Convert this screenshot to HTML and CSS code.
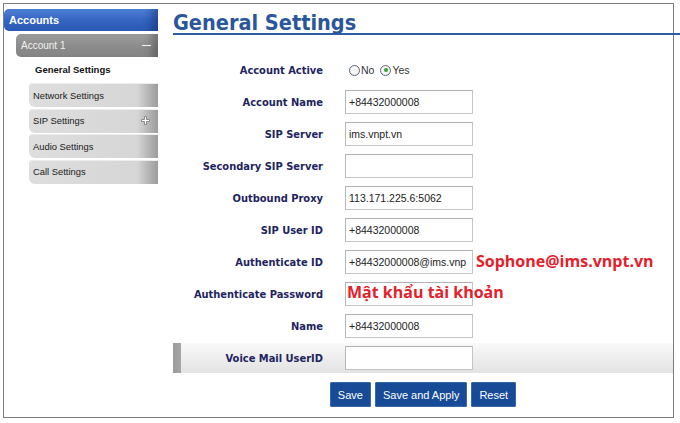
FILE: index.html
```html
<!DOCTYPE html>
<html>
<head>
<meta charset="utf-8">
<link rel="stylesheet" href="styles.css">
</head>
<body>
<div class="frame">
  <aside class="sidebar">
    <div class="accounts">Accounts</div>
    <div class="account1"><span>Account 1</span><span class="dash"></span></div>
    <div class="current">General Settings</div>
    <ul class="nav">
      <li>Network Settings</li>
      <li>SIP Settings
        <svg class="plus" width="9" height="9" viewBox="0 0 9 9"><path d="M3.5 0.5h2v3h3v2h-3v3h-2v-3h-3v-2h3z" fill="#fff" stroke="#8a8a8a" stroke-width="1"/></svg>
      </li>
      <li>Audio Settings</li>
      <li>Call Settings</li>
    </ul>
  </aside>
  <main class="main">
    <h1 class="title">General Settings</h1>
    <div class="form">
      <div class="row">
        <label class="lbl">Account Active</label>
        <div class="radios">
          <span class="radio"></span><span class="rtext">No</span>
          <span class="radio checked"></span><span class="rtext">Yes</span>
        </div>
      </div>
      <div class="row"><label class="lbl">Account Name</label><div class="field">+84432000008</div></div>
      <div class="row"><label class="lbl">SIP Server</label><div class="field">ims.vnpt.vn</div></div>
      <div class="row"><label class="lbl">Secondary SIP Server</label><div class="field"></div></div>
      <div class="row"><label class="lbl">Outbound Proxy</label><div class="field">113.171.225.6:5062</div></div>
      <div class="row"><label class="lbl">SIP User ID</label><div class="field">+84432000008</div></div>
      <div class="row"><label class="lbl">Authenticate ID</label><div class="field">+84432000008@ims.vnp<span class="note note-right">Sophone@ims.vnpt.vn</span></div></div>
      <div class="row"><label class="lbl">Authenticate Password</label><div class="field"><span class="note note-over">Mật khẩu tài khoản</span></div></div>
      <div class="row"><label class="lbl">Name</label><div class="field">+84432000008</div></div>
      <div class="row band"><label class="lbl">Voice Mail UserID</label><div class="field"></div></div>
    </div>
    <div class="buttons">
      <button class="btn">Save</button>
      <button class="btn">Save and Apply</button>
      <button class="btn">Reset</button>
    </div>
  </main>
</div>
</body>
</html>
```

FILE: styles.css
```css
html, body {
  margin: 0;
  padding: 0;
  background: #fff;
}

.frame {
  margin: 3px 0 0 3px;
  width: 669px;
  height: 413px;
  border: 1px solid #7c7c7c;
  display: flex;
  font-family: "Liberation Sans", Arial, sans-serif;
}

.sidebar {
  width: 154px;
  padding-top: 5px;
  flex: none;
}

.accounts {
  height: 22px;
  line-height: 22px;
  padding-left: 5px;
  border-radius: 5px 0 0 5px;
  background: linear-gradient(to bottom, #4f80d6 0%, #3565c2 50%, #2b5ab6 100%);
  color: #fff;
  font-weight: bold;
  font-size: 11px;
  box-shadow: inset -14px 0 10px -8px rgba(10, 30, 90, 0.45);
}

.account1 {
  margin: 3px 0 0 12px;
  height: 23px;
  padding: 0 6px 0 5px;
  border-radius: 5px 0 0 5px;
  background: linear-gradient(to bottom, #9c9c9c 0%, #8a8a8a 60%, #858585 100%);
  box-shadow: inset -12px 0 8px -6px rgba(0, 0, 0, 0.25);
  color: #f2f2f2;
  font-size: 10px;
  display: flex;
  align-items: center;
  justify-content: space-between;
}

.dash {
  width: 9px;
  height: 1px;
  background: #f4f4f4;
  margin-right: 1px;
}

.current {
  height: 26px;
  line-height: 26px;
  padding-left: 31px;
  font-weight: bold;
  font-size: 9.5px;
  color: #111;
}

.nav {
  list-style: none;
  margin: 0 0 0 25px;
  padding: 0;
}

.nav li {
  height: 24px;
  margin-bottom: 1.5px;
  padding: 0 8px 0 4px;
  border-radius: 4px 0 0 6px;
  background: linear-gradient(to right, #dedede 0%, #d6d6d6 84%, #b4b4b4 93%, #9c9c9c 100%);
  box-shadow: inset 0 1px 0 #ececec;
  font-size: 9.4px;
  color: #1a1a1a;
  display: flex;
  align-items: center;
  justify-content: space-between;
}

.plus {
  display: block;
}

.main {
  margin-left: 15px;
  width: 500px;
  position: relative;
}

.title {
  margin: 0 -7px 0 0;
  padding-top: 8px;
  font-family: "DejaVu Sans", Verdana, sans-serif;
  font-stretch: condensed;
  font-size: 21.5px;
  line-height: 21px;
  font-weight: bold;
  color: #2a569c;
  border-bottom: 2px solid #2d5ca8;
}

.form {
  margin-top: 19px;
}

.row {
  height: 32px;
  display: grid;
  grid-template-columns: 150px 128px;
  column-gap: 22px;
  align-items: center;
}

.row.band {
  height: 30px;
  margin: 1px 0;
  background:
    linear-gradient(to right, #9b9b9b 0, #a6a6a6 8px, transparent 8px),
    linear-gradient(to bottom, #f9f9f9 0%, #f0f0f0 40%, #e3e3e3 100%);
}

.lbl {
  text-align: right;
  font-family: "DejaVu Sans", Verdana, sans-serif;
  font-stretch: condensed;
  font-weight: bold;
  font-size: 11px;
  color: #1d2460;
}

.field {
  position: relative;
  height: 22px;
  line-height: 22px;
  border: 1px solid #c4c4c4;
  border-top-color: #b0b0b0;
  border-left-color: #b8b8b8;
  padding-left: 3px;
  font-size: 10.5px;
  color: #222;
  background: #fff;
  white-space: nowrap;
}

.radios {
  display: flex;
  align-items: center;
  padding-left: 4px;
  font-size: 10.5px;
  color: #333;
}

.radio {
  box-sizing: border-box;
  width: 11px;
  height: 11px;
  border: 1px solid #5a6a80;
  border-radius: 50%;
  background: radial-gradient(circle at 40% 40%, #fff 0%, #f2f2f2 60%, #d8d8d8 100%);
  position: relative;
}

.radio.checked::after {
  content: "";
  position: absolute;
  left: 2.5px;
  top: 2.5px;
  width: 4px;
  height: 4px;
  border-radius: 50%;
  background: #2fa32f;
}

.rtext {
  margin: 0 6px 0 1px;
}

.note {
  position: absolute;
  font-family: "Open Sans", "Noto Sans", sans-serif;
  font-weight: bold;
  font-size: 16px;
  color: #e4202a;
  line-height: 20px;
  white-space: nowrap;
}

.note-right {
  left: 130px;
  top: 0;
}

.note-over {
  left: 1px;
  top: -1px;
}

.buttons {
  margin-top: 9px;
  display: flex;
  justify-content: center;
  gap: 4px;
}

.btn {
  height: 25px;
  padding: 0 7px;
  border: 1px solid #3a66aa;
  background: #174b98;
  color: #fff;
  font-family: "Liberation Sans", Arial, sans-serif;
  font-size: 11px;
  border-radius: 1px;
}
```
